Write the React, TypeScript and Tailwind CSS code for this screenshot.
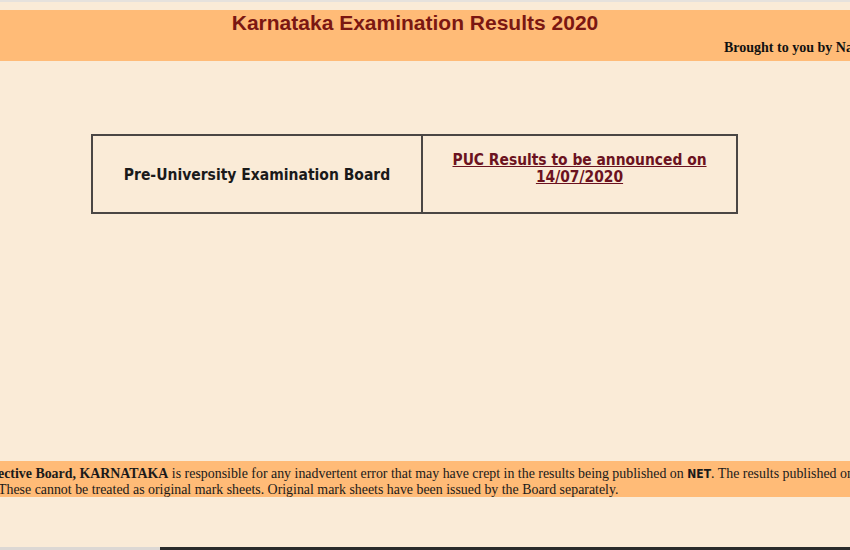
export default function App() {
  return (
    <div className="w-[850px] h-[550px] overflow-hidden bg-[#faebd7] flex flex-col">
      <div className="h-[2px] bg-[#e6e2dd]" />
      <div className="h-[8px]" />
      {/* header band */}
      <div className="h-[51px] bg-[#ffbb77] flex flex-col">
        <h1
          className="text-center pr-[20px] text-[21px] font-bold text-[#7b1712] leading-[24px] mt-[1px]"
          style={{ fontFamily: '"Liberation Sans", Arial, sans-serif' }}
        >
          Karnataka Examination Results 2020
        </h1>
        <div
          className="whitespace-nowrap pl-[724px] mt-[5px] text-[14px] font-bold text-[#111] leading-[16px]"
          style={{ fontFamily: '"Liberation Serif", "Times New Roman", serif' }}
        >
          Brought to you by National Informatics Centre
        </div>
      </div>

      {/* results table */}
      <div className="pt-[73px] pl-[91px]">
        <table className="w-[647px] h-[80px] border-collapse border-2 border-[#4a4644]">
          <tbody>
            <tr>
              <td
                className="w-[330px] border-2 border-[#4a4644] text-center align-middle pt-[4px] text-[15.5px] font-bold text-[#1a1a1a]"
                style={{ fontFamily: '"DejaVu Sans Condensed", "DejaVu Sans", sans-serif' }}
              >
                Pre-University Examination Board
              </td>
              <td
                className="border-2 border-[#4a4644] text-center align-top pt-[16px] text-[15.4px] font-bold leading-[17px]"
                style={{ fontFamily: '"DejaVu Sans Condensed", "DejaVu Sans", sans-serif' }}
              >
                <a href="#" className="text-[#6b1220] underline decoration-[#6b1220]">
                  PUC Results to be announced on
                  <br />
                  14/07/2020
                </a>
              </td>
            </tr>
          </tbody>
        </table>
      </div>

      <div className="flex-1" />

      {/* disclaimer band */}
      <div
        className="bg-[#ffbb77] h-[36px] pt-[5px] text-[13.9px] leading-[16px] text-[#1a1a1a] whitespace-nowrap overflow-hidden"
        style={{ fontFamily: '"Liberation Serif", "Times New Roman", serif' }}
      >
        <div className="ml-[-2px]">
          <b>ective Board, KARNATAKA</b> is responsible for any inadvertent error that may have crept in the results being published on{' '}
          <span className="font-bold text-[12px]" style={{ fontFamily: '"DejaVu Sans Condensed", "DejaVu Sans", sans-serif' }}>NET</span>. The results published on net are for immediate information to the examinees.
        </div>
        <div className="ml-[-2px]">
          These cannot be treated as original mark sheets. Original mark sheets have been issued by the Board separately.
        </div>
      </div>
      <div className="h-[50px]" />
      <div className="h-[3px] flex">
        <div className="w-[160px] bg-[#dcd8d4]" />
        <div className="flex-1 bg-[#2a2b2b]" />
      </div>
    </div>
  );
}
